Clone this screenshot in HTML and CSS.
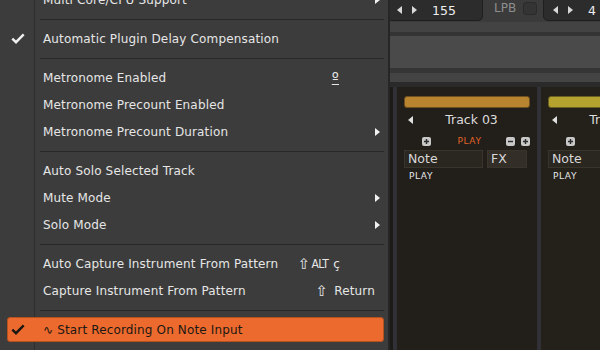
FILE: index.html
```html
<!DOCTYPE html>
<html>
<head>
<meta charset="utf-8">
<link rel="stylesheet" href="styles.css">
</head>
<body>
<div class="app">
  <div class="topbar">
    <div class="spin spin-bpm"><span class="tri-l"></span><span class="tri-r"></span><span class="val">155</span></div>
    <div class="lpb"><span class="lpb-label">LPB</span><span class="lpb-box"></span></div>
    <div class="spin spin-lpb"><span class="tri-l"></span><span class="tri-r"></span><span class="val">4</span></div>
  </div>
  <div class="strip s1"></div>
  <div class="strip s2"></div>
  <div class="strip s3"></div>
  <div class="strip s4"></div>
  <div class="strip s5"></div>
  <div class="strip s6"></div>
  <div class="tracks">
    <div class="lead"></div>
    <div class="vsep"></div>
    <div class="track">
      <div class="band"></div>
      <div class="thead"><span class="arrow"></span><span class="tname">Track 03</span></div>
      <div class="tbtns">
        <span class="bl"><svg class="btn" width="9" height="9" viewBox="0 0 9 9"><rect width="9" height="9" rx="2" fill="#c8c8c8"/><path d="M4.5 2v5M2 4.5h5" stroke="#2a2a2a" stroke-width="1.4"/></svg></span>
        <span class="play-on">PLAY</span>
        <span class="br"><svg class="btn" width="9" height="9" viewBox="0 0 9 9"><rect width="9" height="9" rx="2" fill="#c8c8c8"/><path d="M2 4.5h5" stroke="#2a2a2a" stroke-width="1.4"/></svg><svg class="btn" width="9" height="9" viewBox="0 0 9 9"><rect width="9" height="9" rx="2" fill="#c8c8c8"/><path d="M4.5 2v5M2 4.5h5" stroke="#2a2a2a" stroke-width="1.4"/></svg></span>
      </div>
      <div class="cells"><span class="cell note">Note</span><span class="cell fx">FX</span></div>
      <div class="play">PLAY</div>
    </div>
    <div class="vsep"></div>
    <div class="track t2">
      <div class="band"></div>
      <div class="thead"><span class="arrow"></span><span class="tname">Track 04</span></div>
      <div class="tbtns">
        <span class="bl"><svg class="btn" width="9" height="9" viewBox="0 0 9 9"><rect width="9" height="9" rx="2" fill="#c8c8c8"/><path d="M4.5 2v5M2 4.5h5" stroke="#2a2a2a" stroke-width="1.4"/></svg></span>
        <span class="play-off"></span>
        <span class="br"></span>
      </div>
      <div class="cells"><span class="cell note">Note</span><span class="cell fx">FX</span></div>
      <div class="play">PLAY</div>
    </div>
  </div>
</div>

<div class="menu">
  <div class="item"><span class="ico"></span><span class="label">Multi Core/CPU Support</span><span class="sub"><i class="subtri"></i></span></div>
  <div class="msep"><i></i></div>
  <div class="item"><span class="ico"><svg width="14" height="11" viewBox="0 0 14 11"><path d="M1.3 5.6 L5 9.2 L12.7 1.4" stroke="#f0f0f0" stroke-width="2.4" fill="none"/></svg></span><span class="label">Automatic Plugin Delay Compensation</span><span class="sub"></span></div>
  <div class="msep"><i></i></div>
  <div class="item"><span class="ico"></span><span class="label">Metronome Enabled</span><span class="key ord">º</span><span class="sub"></span></div>
  <div class="item"><span class="ico"></span><span class="label">Metronome Precount Enabled</span><span class="sub"></span></div>
  <div class="item"><span class="ico"></span><span class="label">Metronome Precount Duration</span><span class="sub"><i class="subtri"></i></span></div>
  <div class="msep"><i></i></div>
  <div class="item"><span class="ico"></span><span class="label">Auto Solo Selected Track</span><span class="sub"></span></div>
  <div class="item"><span class="ico"></span><span class="label">Mute Mode</span><span class="sub"><i class="subtri"></i></span></div>
  <div class="item"><span class="ico"></span><span class="label">Solo Mode</span><span class="sub"><i class="subtri"></i></span></div>
  <div class="msep"><i></i></div>
  <div class="item"><span class="ico"></span><span class="label">Auto Capture Instrument From Pattern</span><span class="key key-near"><span class="shift">⇧</span><span class="alt">ALT</span><span class="kname">ç</span></span><span class="sub"></span></div>
  <div class="item"><span class="ico"></span><span class="label">Capture Instrument From Pattern</span><span class="key"><span class="shift">⇧</span><span class="kname kgap">Return</span></span><span class="sub"></span></div>
  <div class="msep"><i></i></div>
  <div class="item active">
    <div class="hl"><span class="ico"><svg width="14" height="11" viewBox="0 0 14 11"><path d="M1.3 5.6 L5 9.2 L12.7 1.4" stroke="#1c1814" stroke-width="2.4" fill="none"/></svg></span><span class="label">∿ Start Recording On Note Input</span></div>
  </div>
</div>
</body>
</html>
```

FILE: styles.css
```css
body {
  margin: 0;
  width: 600px;
  height: 350px;
  overflow: hidden;
  position: relative;
  background: #3a3a3a;
  font-family: "DejaVu Sans", "Liberation Sans", sans-serif;
}

.app {
  display: flex;
  flex-direction: column;
  height: 350px;
}

/* ---------- top bar ---------- */
.topbar {
  height: 22px;
  flex: none;
  display: flex;
  justify-content: flex-end;
  align-items: flex-start;
  background: #3b3b3b;
}

.spin {
  height: 21px;
  box-sizing: border-box;
  background: #2c2c2c;
  border: 1px solid #1f1f1f;
  border-top: none;
  border-radius: 0 0 5px 5px;
  display: flex;
  align-items: center;
  padding-left: 9px;
  color: #eeeeee;
  font-size: 12.5px;
}

.spin-bpm { width: 96px; }
.spin-lpb { width: 62px; margin-right: -5px; }

.tri-l, .tri-r {
  width: 0;
  height: 0;
  border-top: 4px solid transparent;
  border-bottom: 4px solid transparent;
}
.tri-l { border-right: 5px solid #d8d8d8; }
.tri-r { border-left: 5px solid #d8d8d8; margin-left: 10px; }

.val { margin-left: 15px; }

.lpb {
  width: 60px;
  box-sizing: border-box;
  height: 15px;
  display: flex;
  align-items: center;
  padding-left: 11px;
  gap: 7px;
}
.lpb-label { color: #8e8e8e; font-size: 12px; }
.lpb-box {
  width: 14px;
  height: 13px;
  box-sizing: border-box;
  background: #343434;
  border: 1px solid #2a2a2a;
  border-radius: 3px;
  margin-top: 1px;
}

/* ---------- strips ---------- */
.strip { flex: none; }
.s1 { height: 10px; background: #434343; }
.s2 { height: 4px; background: #343434; }
.s3 { height: 32px; background: #4a4a4a; }
.s4 { height: 5px; background: #353535; }
.s5 { height: 9px; background: #444444; }
.s6 { height: 5px; background: #2a2a2a; }

/* ---------- tracks ---------- */
.tracks {
  flex: 1;
  display: flex;
  background: #1d1b18;
}

.lead { width: 393px; flex: none; }
.vsep { width: 4px; flex: none; background: #303036; }

.track {
  width: 140px;
  flex: none;
  box-sizing: border-box;
  background: #221e19;
  padding: 9px 7px 0;
}
.t2 { background: #24201a; }

.band {
  height: 12px;
  box-sizing: border-box;
  border-radius: 3px;
  background: #b8842f;
  border: 1px solid #6e5020;
}
.t2 .band { background: #b5a32f; border-color: #6b6020; }

.thead {
  display: flex;
  align-items: center;
  height: 15px;
  margin-top: 4px;
}
.arrow {
  width: 0;
  height: 0;
  margin-left: 4px;
  border-top: 4px solid transparent;
  border-bottom: 4px solid transparent;
  border-right: 5px solid #e0e0e0;
}
.tname {
  flex: 1;
  text-align: center;
  font-size: 12.5px;
  color: #dcdcdc;
}

.tbtns {
  display: grid;
  grid-template-columns: 1fr auto 1fr;
  align-items: center;
  height: 10px;
  margin-top: 9px;
}
.bl { justify-self: start; margin-left: 18px; display: flex; }
.br { justify-self: end; display: flex; gap: 6px; }
.btn { display: block; }
.play-on {
  color: #e0642a;
  font-size: 9px;
  letter-spacing: 0.6px;
  margin-left: 5px;
}

.cells {
  display: flex;
  gap: 4px;
  margin-top: 4px;
}
.cell {
  height: 18px;
  box-sizing: border-box;
  border: 1px solid #39342c;
  background: #2a2620;
  font-size: 12.5px;
  line-height: 16px;
  color: #d8d8d8;
  padding-left: 3px;
}
.note { width: 79px; }
.fx { width: 40px; background: #332e27; }

.play {
  font-size: 9px;
  letter-spacing: 0.6px;
  color: #e8e8e8;
  margin: 3px 0 0 5px;
}

/* ---------- menu ---------- */
.menu {
  position: absolute;
  left: 0;
  top: -14px;
  width: 388px;
  padding-bottom: 20px;
  border-right: 2px solid #262626;
  background: linear-gradient(to right, #3c3c3c 34px, #2e2e2e 34px, #2e2e2e 35px, #3c3c3c 35px);
  font-size: 12px;
  letter-spacing: 0.15px;
  color: #e6e6e6;
}

.item {
  height: 27px;
  display: flex;
  align-items: center;
  white-space: nowrap;
}

.ico {
  width: 35px;
  flex: none;
  display: flex;
  justify-content: center;
}

.label {
  flex: 1;
  padding-left: 8px;
}

.key { flex: none; display: flex; align-items: center; }
.key-near { margin-right: 35px; }
.ord { font-size: 15px; text-decoration: underline; text-underline-offset: 1px; margin-right: 36px; }
.shift { font-size: 15px; line-height: 12px; margin-right: 1px; }
.alt { font-family: "DejaVu Sans Condensed", "DejaVu Sans", sans-serif; letter-spacing: -0.5px; }
.kname { margin-left: 5px; }
.kgap { margin-left: 5px; }

.sub {
  width: 13px;
  flex: none;
  display: flex;
  align-items: center;
}
.subtri {
  width: 0;
  height: 0;
  border-top: 4px solid transparent;
  border-bottom: 4px solid transparent;
  border-left: 5px solid #f2f2f2;
}

.msep {
  height: 12px;
  box-sizing: border-box;
  padding: 6px 4px 0 40px;
}
.msep i {
  display: block;
  height: 1px;
  background: #282828;
}

.item.active {
  padding: 1px 4px 1px 7px;
  box-sizing: border-box;
}
.hl {
  flex: 1;
  height: 25px;
  box-sizing: border-box;
  display: flex;
  align-items: center;
  background: #ec6a2d;
  border: 1px solid #b5501f;
  border-radius: 3px;
  color: #1c1814;
}
.hl .ico { width: 19px; }
.hl .label { padding-left: 16px; }
```
